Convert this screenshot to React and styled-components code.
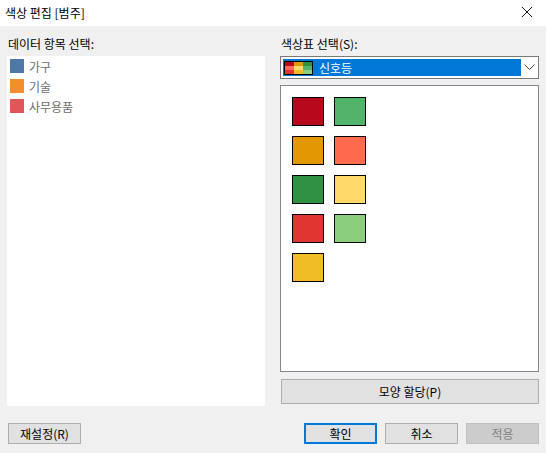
import styled, { createGlobalStyle } from "styled-components";

const GlobalStyle = createGlobalStyle`
  html, body {
    margin: 0;
    padding: 0;
    background: #f0f0f0;
  }
  * {
    box-sizing: border-box;
  }
`;

const categories = [
  { name: "가구", color: "#4e79a7" },
  { name: "기술", color: "#f28e2b" },
  { name: "사무용품", color: "#e15759" },
];

const palette = [
  "#b60a1c",
  "#52b46b",
  "#e39802",
  "#ff6b4f",
  "#309143",
  "#ffda6a",
  "#e03531",
  "#8ace7e",
  "#f0bd27",
];

export default function App() {
  return (
    <>
      <GlobalStyle />
      <Window>
        <TitleBar>
          <Title>색상 편집 [범주]</Title>
          <CloseBtn>
            <svg width="12" height="12" viewBox="0 0 12 12">
              <path d="M1 1 L11 11 M11 1 L1 11" stroke="#111" strokeWidth="1" />
            </svg>
          </CloseBtn>
        </TitleBar>
        <Body>
          <Columns>
            <Column $width={258}>
              <Label>데이터 항목 선택:</Label>
              <ItemList>
                {categories.map((c) => (
                  <Item key={c.name}>
                    <ItemSwatch $color={c.color} />
                    <ItemText>{c.name}</ItemText>
                  </Item>
                ))}
              </ItemList>
            </Column>
            <Column $width={259}>
              <Label>색상표 선택(S):</Label>
              <Select>
                <Selected>
                  <PaletteIcon width="29" height="14" viewBox="0 0 29 14">
                    <rect x="0.5" y="0.5" width="28" height="13" fill="#fff" stroke="#000" />
                    <rect x="1" y="1" width="9" height="4" fill="#b60a1c" />
                    <rect x="1" y="5" width="9" height="4" fill="#ff6b4f" />
                    <rect x="1" y="9" width="9" height="4" fill="#e03531" />
                    <rect x="10" y="1" width="9" height="4" fill="#e39802" />
                    <rect x="10" y="5" width="9" height="4" fill="#ffda6a" />
                    <rect x="10" y="9" width="9" height="4" fill="#f0bd27" />
                    <rect x="19" y="1" width="9" height="4" fill="#309143" />
                    <rect x="19" y="5" width="9" height="4" fill="#52b46b" />
                    <rect x="19" y="9" width="9" height="4" fill="#8ace7e" />
                  </PaletteIcon>
                  <SelectedText>신호등</SelectedText>
                </Selected>
                <Chevron>
                  <svg width="11" height="7" viewBox="0 0 11 7">
                    <path d="M0.5 0.5 L5.5 5.5 L10.5 0.5" fill="none" stroke="#444" strokeWidth="1" />
                  </svg>
                </Chevron>
              </Select>
              <SwatchPanel>
                <SwatchGrid>
                  {palette.map((c, i) => (
                    <Swatch key={i} $color={c} />
                  ))}
                </SwatchGrid>
              </SwatchPanel>
              <WideButton>모양 할당(P)</WideButton>
            </Column>
          </Columns>
          <Footer>
            <Button $width={73}>재설정(R)</Button>
            <FooterRight>
              <Button $width={73} $primary>
                확인
              </Button>
              <Button $width={73}>취소</Button>
              <Button $width={73} disabled>
                적용
              </Button>
            </FooterRight>
          </Footer>
        </Body>
      </Window>
    </>
  );
}

const Window = styled.div`
  width: 546px;
  height: 453px;
  display: flex;
  flex-direction: column;
  font-family: "Noto Sans CJK KR", "Noto Sans", sans-serif;
  font-size: 12px;
  color: #000;
  background: #f0f0f0;
`;

const TitleBar = styled.div`
  height: 26px;
  background: #fff;
  display: flex;
  align-items: center;
  justify-content: space-between;
  padding: 0 0 2px 5px;
`;

const Title = styled.span`
  font-size: 12px;
  color: #000;
`;

const CloseBtn = styled.div`
  width: 30px;
  height: 24px;
  margin-right: 4px;
  display: flex;
  align-items: center;
  justify-content: center;
`;

const Body = styled.div`
  flex: 1;
  display: flex;
  flex-direction: column;
  padding: 0 7px 9px 7px;
`;

const Columns = styled.div`
  display: flex;
  gap: 15px;
`;

const Column = styled.div`
  width: ${(p) => p.$width}px;
  display: flex;
  flex-direction: column;
`;

const Label = styled.div`
  height: 30px;
  padding-top: 10px;
  line-height: 16px;
  padding-left: 1px;
`;

const ItemList = styled.div`
  height: 350px;
  background: #fff;
`;

const Item = styled.div`
  height: 20px;
  display: flex;
  align-items: center;
  padding-left: 3px;
  gap: 5px;
`;

const ItemSwatch = styled.div`
  width: 14px;
  height: 14px;
  background: ${(p) => p.$color};
`;

const ItemText = styled.span`
  color: #6d6d6d;
  font-size: 12px;
`;

const Select = styled.div`
  height: 23px;
  border: 1px solid #7a7a7a;
  background: #fff;
  display: flex;
  align-items: center;
  padding: 0 0 0 2px;
`;

const Selected = styled.div`
  width: 238px;
  height: 17px;
  background: #0078d7;
  display: flex;
  align-items: center;
  gap: 6px;
`;

const PaletteIcon = styled.svg`
  display: block;
  margin-left: 1px;
`;

const SelectedText = styled.span`
  color: #fff;
  font-size: 12px;
`;

const Chevron = styled.div`
  flex: 1;
  display: flex;
  align-items: center;
  justify-content: center;
`;

const SwatchPanel = styled.div`
  margin-top: 6px;
  height: 287px;
  background: #fff;
  border: 1px solid #828790;
  padding: 11px 0 0 11px;
`;

const SwatchGrid = styled.div`
  display: grid;
  grid-template-columns: repeat(2, 32px);
  grid-auto-rows: 29px;
  column-gap: 10px;
  row-gap: 10px;
`;

const Swatch = styled.div`
  background: ${(p) => p.$color};
  border: 1px solid #000;
`;

const WideButton = styled.button`
  margin-top: 7px;
  margin-left: 1px;
  height: 25px;
  width: 258px;
  background: #e1e1e1;
  border: 1px solid #adadad;
  font-family: inherit;
  font-size: 12px;
  color: #000;
  padding: 0;
`;

const Footer = styled.div`
  margin-top: auto;
  display: flex;
  justify-content: space-between;
  align-items: center;
  padding-left: 1px;
`;

const FooterRight = styled.div`
  display: flex;
  gap: 8px;
`;

const Button = styled.button`
  width: ${(p) => p.$width}px;
  height: 21px;
  padding: 0;
  font-family: inherit;
  font-size: 12px;
  color: #000;
  background: #e1e1e1;
  border: ${(p) => (p.$primary ? "2px solid #0078d7" : "1px solid #adadad")};
  &:disabled {
    background: #cccccc;
    border-color: #bfbfbf;
    color: #838383;
  }
`;
